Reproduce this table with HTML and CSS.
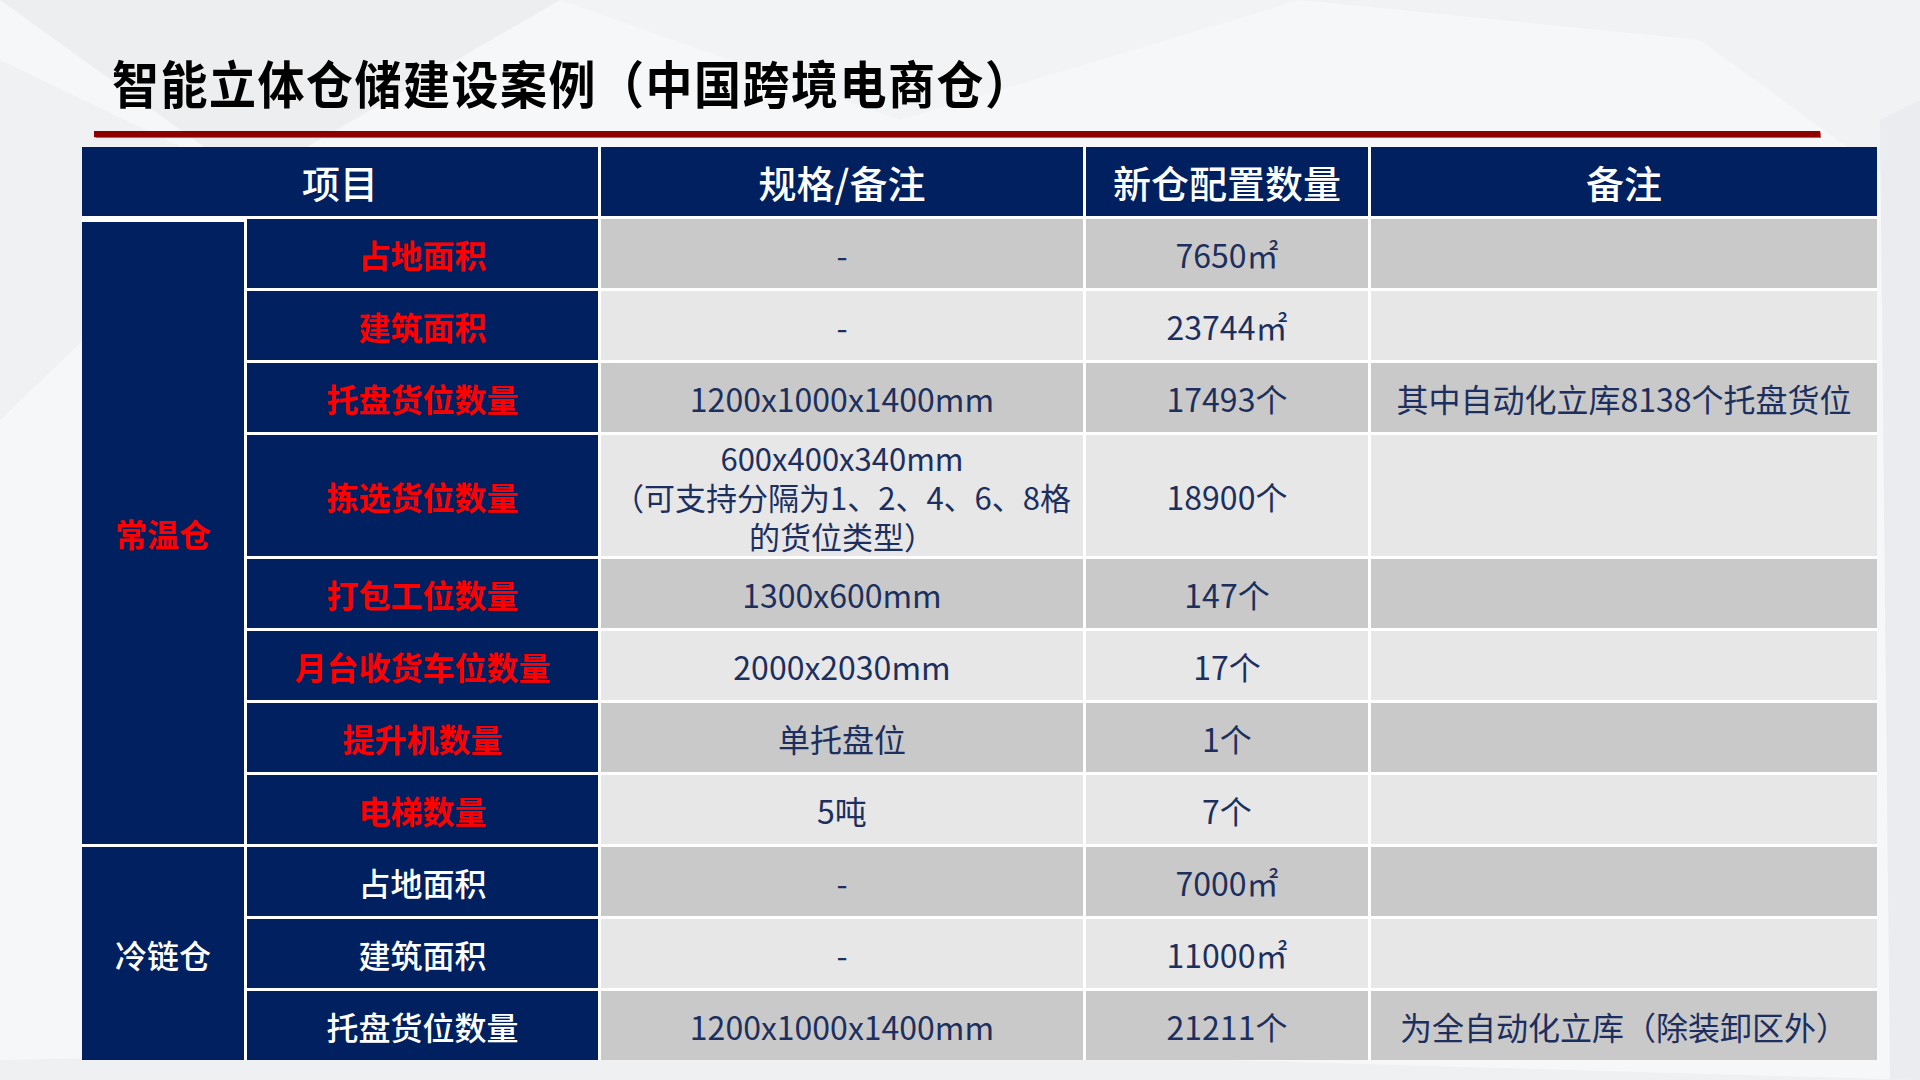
FILE: index.html
```html
<!DOCTYPE html>
<html lang="zh-CN">
<head>
<meta charset="utf-8">
<title>智能立体仓储建设案例（中国跨境电商仓）</title>
<link rel="stylesheet" href="styles.css">
</head>
<body>
<div class="page">
  <svg class="bg" width="1920" height="1080" viewBox="0 0 1920 1080" aria-hidden="true">
    <polygon points="0,0 560,0 250,180" fill="#eceef0"/>
    <polygon points="0,60 250,180 0,420" fill="#f0f1f3"/>
    <polygon points="560,0 1300,0 900,120" fill="#f2f3f5"/>
    <polygon points="1300,0 1920,0 1920,200 1700,40" fill="#f1f2f4"/>
    <polygon points="1880,120 1920,100 1920,1080 1890,1080" fill="#eaecef"/>
    <polygon points="0,1060 700,1045 1920,1080 0,1080" fill="#eef0f2"/>
  </svg>
  <div class="content">
    <h1 class="title">智能立体仓储建设案例（中国跨境电商仓）</h1>
    <div class="rule"></div>
    <div class="grid">
      <div class="hd span2">项目</div>
      <div class="hd">规格/备注</div>
      <div class="hd">新仓配置数量</div>
      <div class="hd">备注</div>

      <div class="cat red warm">常温仓</div>
      <div class="lbl red">占地面积</div>
      <div class="c dk">-</div>
      <div class="c dk">7650㎡</div>
      <div class="c dk"></div>

      <div class="lbl red">建筑面积</div>
      <div class="c lt">-</div>
      <div class="c lt">23744㎡</div>
      <div class="c lt"></div>

      <div class="lbl red">托盘货位数量</div>
      <div class="c dk">1200x1000x1400mm</div>
      <div class="c dk">17493个</div>
      <div class="c dk">其中自动化立库8138个托盘货位</div>

      <div class="lbl red">拣选货位数量</div>
      <div class="c lt multi">
        <span class="ln">600x400x340mm</span>
        <span class="ln">（可支持分隔为1、2、4、6、8格</span>
        <span class="ln">的货位类型）</span>
      </div>
      <div class="c lt">18900个</div>
      <div class="c lt"></div>

      <div class="lbl red">打包工位数量</div>
      <div class="c dk">1300x600mm</div>
      <div class="c dk">147个</div>
      <div class="c dk"></div>

      <div class="lbl red">月台收货车位数量</div>
      <div class="c lt">2000x2030mm</div>
      <div class="c lt">17个</div>
      <div class="c lt"></div>

      <div class="lbl red">提升机数量</div>
      <div class="c dk">单托盘位</div>
      <div class="c dk">1个</div>
      <div class="c dk"></div>

      <div class="lbl red">电梯数量</div>
      <div class="c lt">5吨</div>
      <div class="c lt">7个</div>
      <div class="c lt"></div>

      <div class="cat white cold">冷链仓</div>
      <div class="lbl white">占地面积</div>
      <div class="c dk">-</div>
      <div class="c dk">7000㎡</div>
      <div class="c dk"></div>

      <div class="lbl white">建筑面积</div>
      <div class="c lt">-</div>
      <div class="c lt">11000㎡</div>
      <div class="c lt"></div>

      <div class="lbl white">托盘货位数量</div>
      <div class="c dk">1200x1000x1400mm</div>
      <div class="c dk">21211个</div>
      <div class="c dk">为全自动化立库（除装卸区外）</div>
    </div>
  </div>
</div>
</body>
</html>
```

FILE: styles.css
```css
html, body {
  margin: 0;
  padding: 0;
  background: #f4f5f7;
}

.page {
  position: relative;
  width: 1920px;
  height: 1080px;
  overflow: hidden;
  background: #f6f7f9;
  font-family: "Noto Sans CJK SC", "Noto Sans", sans-serif;
}

.bg {
  position: absolute;
  left: 0;
  top: 0;
}

.content {
  position: relative;
  box-sizing: border-box;
  padding: 50px 43px 0 82px;
}

.title {
  margin: 0;
  padding-left: 30px;
  height: 64px;
  line-height: 64px;
  font-size: 47px;
  font-weight: 700;
  color: #000;
  letter-spacing: 1.5px;
  white-space: nowrap;
  transform: scaleY(1.08);
  transform-origin: left center;
}

.rule {
  margin: 17px 0 0 12px;
  width: 1726px;
  height: 6px;
  background: #8e0000;
  box-shadow: 0 0 1px 0.5px #c55a5a;
}

.grid {
  margin-top: 10px;
  display: grid;
  grid-template-columns: 162px 351px 482px 282px 506px;
  grid-template-rows: 69px repeat(3, 69px) 121px repeat(7, 69px);
  gap: 3px;
  background: #ffffff;
  width: 1795px;
}

.grid > div {
  display: flex;
  align-items: center;
  justify-content: center;
  text-align: center;
  white-space: nowrap;
}

.hd {
  background: #002060;
  color: #ffffff;
  font-size: 38px;
  font-weight: 500;
}

.span2 {
  grid-column: span 2;
}

.cat {
  background: #002060;
  font-size: 32px;
  font-weight: 700;
}

.warm {
  grid-row: span 8;
  border-top: 3px solid #ffffff;
}

.cold {
  grid-row: span 3;
}

.lbl {
  background: #002060;
  font-size: 32px;
}

.red {
  color: #ff0000;
  font-weight: 700;
}

.white {
  color: #ffffff;
  font-weight: 500;
}

.c {
  font-size: 32px;
  color: #1c2f5e;
}

.dk {
  background: #c9c9c9;
}

.lt {
  background: #e7e7e7;
}

.grid > .multi {
  flex-direction: column;
  padding-top: 2px;
}

.ln {
  display: block;
  height: 39px;
  line-height: 39px;
  font-size: 31px;
}
```
